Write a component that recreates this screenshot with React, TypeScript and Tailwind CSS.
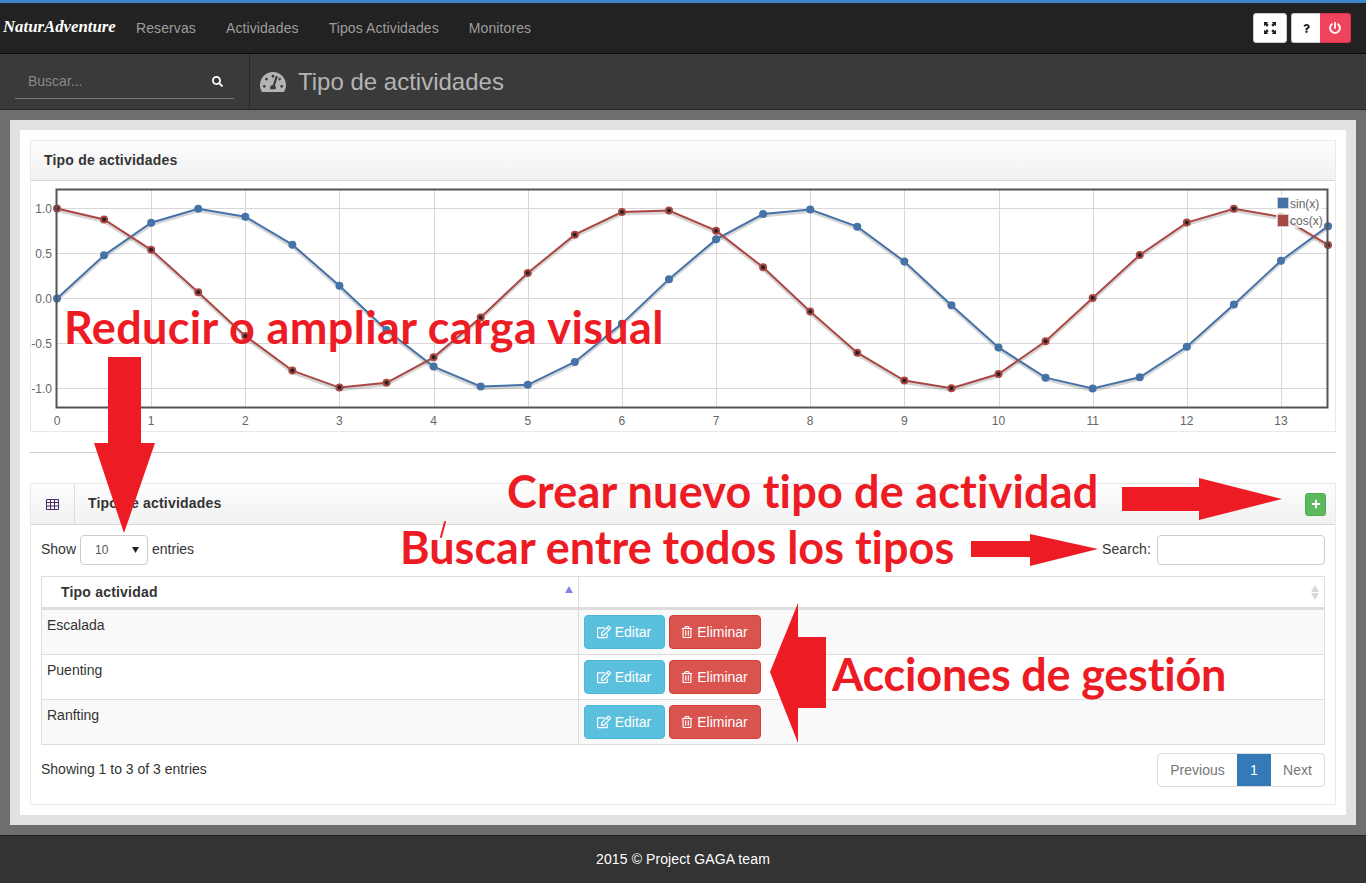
import React from "react";
import { FaRegEdit, FaRegTrashAlt, FaSearch, FaTachometerAlt, FaPlus, FaPowerOff, FaQuestion } from "react-icons/fa";

const xs = Array.from({ length: 28 }, (_, i) => i * 0.5);
const px = (x: number) => 57 + x * 94.15;
const py = (y: number) => 298.5 - y * 90;
const sinPts = xs.map((x) => [px(x), py(Math.sin(x))]);
const cosPts = xs.map((x) => [px(x), py(Math.cos(x))]);
const toStr = (p: number[][], dy = 0) => p.map(([a, b]) => `${a},${b + dy}`).join(" ");

function Chart() {
  return (
    <svg viewBox="31 181 1304 250" className="block w-[1304px] h-[250px]" fontFamily="'Liberation Sans', sans-serif">
      {[1, 2, 3, 4, 5, 6, 7, 8, 9, 10, 11, 12, 13].map((i) => (
        <line key={i} x1={Math.round(px(i)) + 0.5} x2={Math.round(px(i)) + 0.5} y1={189} y2={407} stroke="#d8d8d8" />
      ))}
      {[1, 0.5, 0, -0.5, -1].map((v) => (
        <line key={v} x1={56} x2={1327} y1={Math.floor(py(v)) + 0.5} y2={Math.floor(py(v)) + 0.5} stroke="#d8d8d8" />
      ))}
      {[1, 0.5, 0, -0.5, -1].map((v) => (
        <text key={v} x={52} y={py(v) + 4} textAnchor="end" fontSize="12" fill="#666">{v.toFixed(1)}</text>
      ))}
      {[0, 1, 2, 3, 4, 5, 6, 7, 8, 9, 10, 11, 12, 13].map((i) => (
        <text key={i} x={px(i)} y={425} textAnchor="middle" fontSize="12" fill="#666">{i}</text>
      ))}
      <polyline points={toStr(sinPts, 2)} fill="none" stroke="#000" strokeOpacity="0.16" strokeWidth="3" />
      <polyline points={toStr(cosPts, 2)} fill="none" stroke="#000" strokeOpacity="0.16" strokeWidth="3" />
      <polyline points={toStr(sinPts)} fill="none" stroke="#4572a7" strokeWidth="2" />
      <polyline points={toStr(cosPts)} fill="none" stroke="#aa4643" strokeWidth="2" />
      {sinPts.map(([a, b], i) => <circle key={i} cx={a} cy={b} r="4" fill="#4572a7" />)}
      {cosPts.map(([a, b], i) => (
        <circle key={i} cx={a} cy={b} r="3" fill="#222" stroke="#aa4643" strokeWidth="2" />
      ))}
      <rect x="56.5" y="189.5" width="1271" height="218" fill="none" stroke="#545454" strokeWidth="2" />
      <rect x="1276" y="195" width="47" height="33" fill="#fff" fillOpacity="0.7" />
      <rect x="1277.5" y="197.5" width="11" height="11" fill="#4572a7" stroke="#ccc" />
      <rect x="1277.5" y="214.5" width="11" height="12" fill="#aa4643" stroke="#ccc" />
      <text x="1290" y="208" fontSize="12" fill="#666">sin(x)</text>
      <text x="1290" y="225" fontSize="12" fill="#666">cos(x)</text>
    </svg>
  );
}

function Row({ name, striped }: { name: string; striped: boolean }) {
  return (
    <div className={`flex h-[45px] border-b border-[#ddd] ${striped ? "bg-[#f9f9f9]" : "bg-white"}`}>
      <div className="w-[537px] border-r border-[#ddd] pl-[5px] pt-[5px] text-[14px] leading-[20px] text-[#333]">{name}</div>
      <div className="flex gap-1 pl-[5px] pt-[5px]">
        <div className="flex h-[34px] w-[81px] items-center justify-center gap-1 rounded border border-[#46b8da] bg-[#5bc0de] pr-px text-[14px] text-white">
          <FaRegEdit size={14} /> Editar
        </div>
        <div className="flex h-[34px] w-[92px] items-center justify-center gap-1 rounded border border-[#d43f3a] bg-[#d9534f] pr-px text-[14px] text-white">
          <FaRegTrashAlt size={12} /> Eliminar
        </div>
      </div>
    </div>
  );
}

const red = "absolute whitespace-nowrap font-bold text-[#ed1c24] leading-none text-[45px] [font-variant-ligatures:none]";

function Annotations() {
  return (
    <>
      <div className={`${red} left-[64px] top-[305px] tracking-[0.35px]`} style={{ fontFamily: "Lato, sans-serif" }}>Reducir o ampliar carga visual</div>
      <div className={`${red} left-[507px] top-[469px] tracking-[0.18px]`} style={{ fontFamily: "Lato, sans-serif" }}>Crear nuevo tipo de actividad</div>
      <div className={`${red} left-[400px] top-[525px]`} style={{ fontFamily: "Lato, sans-serif" }}>Buscar entre todos los tipos</div>
      <div className={`${red} left-[832px] top-[652px] tracking-[-0.2px]`} style={{ fontFamily: "Lato, sans-serif" }}>Acciones de gestión</div>
      <svg className="absolute left-0 top-0 w-[1366px] h-[883px] pointer-events-none" viewBox="0 0 1366 883">
        <g fill="#ed1c24">
          <path d="M108 357H141V443H155L124 533L94 443H108Z" />
          <path d="M1122 487H1199V478L1282 499L1199 520V511H1122Z" />
          <path d="M971 541H1030V534L1098 549L1030 566V557H971Z" />
          <path d="M826 637V708H798V743L770 672L798 603V637Z" />
        </g>
        <path d="M445 522L441 537" stroke="#ed1c24" strokeWidth="2" strokeLinecap="round" />
      </svg>
    </>
  );
}

export default function App() {
  return (
    <div className="relative flex h-[883px] w-[1366px] flex-col overflow-hidden bg-[#6e6e6e]" style={{ fontFamily: "'Liberation Sans', Arial, sans-serif" }}>
      <header className="flex h-[54px] shrink-0 items-center justify-between border-t-[3px] border-b border-t-[#3d85c6] border-b-[#0c0c0c] bg-[#222] pr-[15px]">
        <div className="flex items-center">
          <div className="ml-[3px] w-[133px] pb-[3px] text-[16.8px] font-bold italic text-white" style={{ fontFamily: "'Liberation Serif', serif" }}>NaturAdventure</div>
          <nav className="flex gap-[30px] text-[14px] tracking-[0.1px] text-[#9d9d9d]">
            <span>Reservas</span><span>Actividades</span><span>Tipos Actividades</span><span>Monitores</span>
          </nav>
        </div>
        <div className="flex gap-1">
          <div className="flex h-[30px] w-[34px] items-center justify-center rounded-[3px] border border-[#ccc] bg-white">
            <svg viewBox="0 0 14 14" width="12" height="12" fill="#222">
              <path d="M0 0H5L3.5 1.5L5.5 3.5L3.5 5.5L1.5 3.5L0 5Z" />
              <path d="M14 0H9L10.5 1.5L8.5 3.5L10.5 5.5L12.5 3.5L14 5Z" />
              <path d="M0 14H5L3.5 12.5L5.5 10.5L3.5 8.5L1.5 10.5L0 9Z" />
              <path d="M14 14H9L10.5 12.5L8.5 10.5L10.5 8.5L12.5 10.5L14 9Z" />
            </svg>
          </div>
          <div className="flex">
            <div className="flex h-[30px] w-[29px] items-center justify-center rounded-l-[3px] border border-r-0 border-[#ccc] bg-white text-[#222]">
              <FaQuestion size={9} />
            </div>
            <div className="flex h-[30px] w-[31px] items-center justify-center rounded-r-[3px] border border-l-0 border-[#e0304c] bg-[#f0435c] text-white">
              <FaPowerOff size={12} />
            </div>
          </div>
        </div>
      </header>

      <div className="flex h-[56px] shrink-0 border-b border-[#222] bg-[#3a3a3a]">
        <div className="w-[250px] border-r border-[#2a2a2a] px-[15px] pt-[7px]">
          <div className="flex h-[38px] w-[219px] items-center justify-between border-b border-[#777] pl-[13px] pr-[11px] pt-[4px] text-[14px] text-[#888]">
            <span>Buscar...</span>
            <FaSearch size={11} className="text-white" />
          </div>
        </div>
        <div className="flex items-center gap-[12px] pl-[10px] text-[24px] text-[#b4b4b4]">
          <FaTachometerAlt size={26} />
          <span>Tipo de actividades</span>
        </div>
      </div>

      <main className="min-h-0 flex-1 p-[10px]">
        <div className="h-full bg-[#e2e2e2] p-[10px]">
          <div className="h-full bg-white p-[10px]">
            <section className="border border-[#e9e9e9]">
              <div className="flex h-[40px] items-center border-b border-[#d8d8d8] bg-gradient-to-b from-[#fdfdfd] to-[#f1f1f1] pl-[13px] text-[14px] font-bold tracking-[0.2px] text-[#333]">Tipo de actividades</div>
              <Chart />
            </section>
            <hr className="mb-[30px] mt-[20px] border-[#ccc]" />
            <section className="border border-[#e9e9e9]">
              <div className="flex h-[41px] items-center border-b border-[#d8d8d8] bg-gradient-to-b from-[#fdfdfd] to-[#f1f1f1] pr-[9px]">
                <div className="flex h-full w-[44px] items-center justify-center border-r border-[#ddd]">
                  <svg width="13" height="11" viewBox="0 0 13 11" fill="none" stroke="#4b2a66">
                    <path d="M.5 .5H12.5V10.5H.5ZM.5 3.5H12.5M.5 7H12.5M4.5 .5V10.5M8.5 .5V10.5" />
                  </svg>
                </div>
                <div className="mb-[2px] ml-[13px] flex-1 text-[14px] font-bold tracking-[0.2px] text-[#333]">Tipo de actividades</div>
                <div className="flex h-[23px] w-[21px] items-center justify-center rounded-[3px] border border-[#4cae4c] bg-[#5cb85c] text-white"><FaPlus size={10} /></div>
              </div>
              <div className="px-[10px] pb-[17px] pt-[10px]">
                <div className="flex h-[30px] items-center justify-between text-[14px] text-[#333]">
                  <div className="flex items-center gap-[4px]">
                    <span className="mb-[2px]">Show</span>
                    <div className="flex h-[30px] w-[68px] items-center justify-between rounded border border-[#ccc] bg-white pl-[14px] pr-[8px] text-[12px] text-[#555]">
                      <span>10</span>
                      <svg width="7" height="6" viewBox="0 0 7 6"><path d="M0 0H7L3.5 6Z" fill="#222" /></svg>
                    </div>
                    <span className="mb-[2px]">entries</span>
                  </div>
                  <div className="flex items-center gap-[6px]">
                    <span className="mb-[2px] tracking-[0.1px]">Search:</span>
                    <div className="h-[30px] w-[168px] rounded border border-[#ccc] bg-white" />
                  </div>
                </div>
                <div className="mt-[11px] border-x border-t border-[#ddd]">
                  <div className="flex h-[33px] border-b-[3px] border-[#ddd] bg-white">
                    <div className="relative w-[537px] border-r border-[#ddd] pl-[19px] pt-[5px] text-[14px] font-bold tracking-[0.2px] text-[#333]">
                      Tipo actividad
                      <svg className="absolute right-[5px] top-[9px]" width="8" height="7" viewBox="0 0 8 7"><path d="M4 0L8 7H0Z" fill="#8585e0" /></svg>
                    </div>
                    <div className="relative flex-1">
                      <svg className="absolute right-[5px] top-[8px]" width="8" height="15" viewBox="0 0 8 15"><path d="M4 0L8 7H0ZM4 15L0 8H8Z" fill="#d8d8d8" /></svg>
                    </div>
                  </div>
                  <Row name="Escalada" striped />
                  <Row name="Puenting" striped={false} />
                  <Row name="Ranfting" striped />
                </div>
                <div className="mt-[8px] flex items-start justify-between text-[14px]">
                  <span className="pt-[6px] text-[#333]">Showing 1 to 3 of 3 entries</span>
                  <div className="flex h-[34px] overflow-hidden rounded border border-[#ddd] bg-white text-[#777]">
                    <span className="flex w-[79px] items-center justify-center">Previous</span>
                    <span className="flex w-[34px] items-center justify-center bg-[#337ab7] text-white">1</span>
                    <span className="flex w-[53px] items-center justify-center">Next</span>
                  </div>
                </div>
              </div>
            </section>
          </div>
        </div>
      </main>

      <footer className="flex h-[48px] shrink-0 items-center justify-center border-t border-[#222] bg-[#333] text-[14px] tracking-[0.1px] text-white">2015 © Project GAGA team</footer>
      <Annotations />
    </div>
  );
}
